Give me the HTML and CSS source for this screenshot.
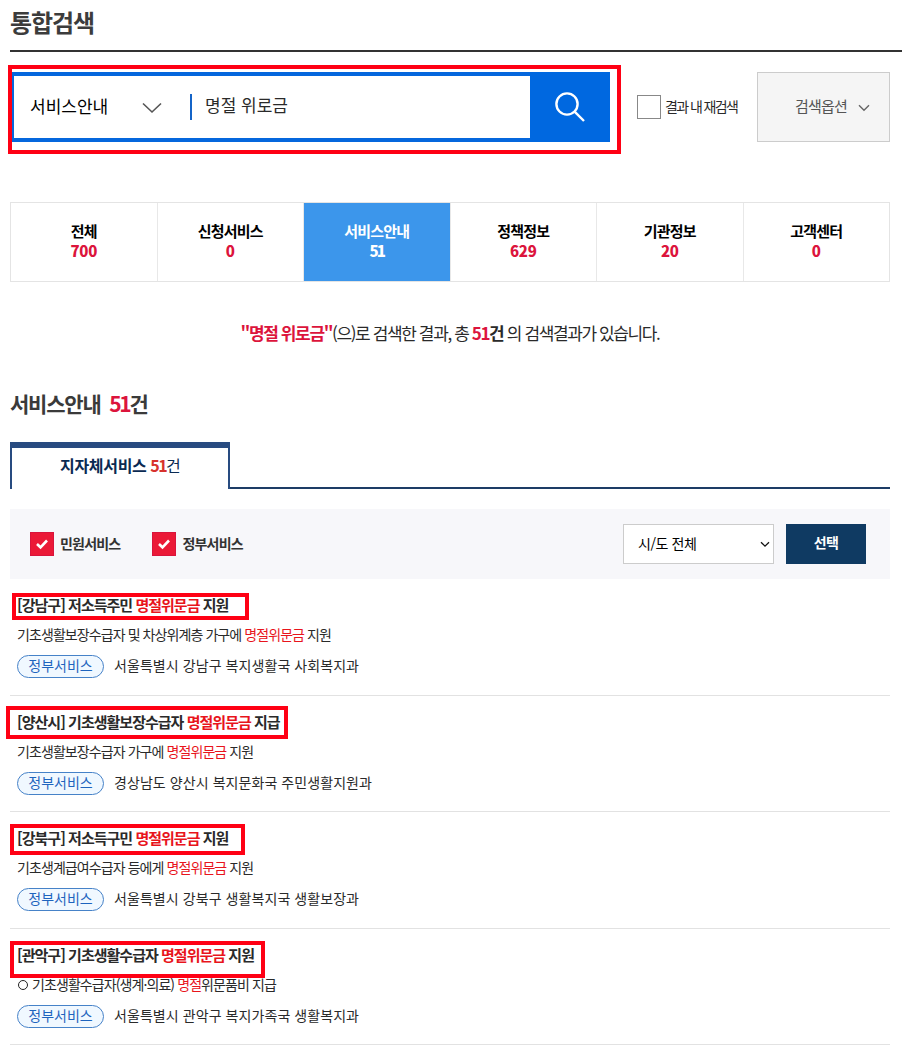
FILE: index.html
```
<!DOCTYPE html>
<html lang="ko">
<head>
<meta charset="utf-8">
<title>통합검색</title>
<link rel="stylesheet" href="styles.css">
</head>
<body>

<h1 class="page-title">통합검색</h1>

<!-- search bar -->
<div class="search">
  <div class="search-box">
    <div class="search-type">서비스안내
      <svg width="20" height="12" viewBox="0 0 20 12"><path d="M1 1.5L10 10L19 1.5" fill="none" stroke="#555" stroke-width="1.6"/></svg>
    </div>
    <div class="search-word">명절 위로금</div>
    <div class="search-btn">
      <svg width="32" height="32" viewBox="0 0 32 32" fill="none" stroke="#fff" stroke-width="2.4"><circle cx="13" cy="13" r="10.6"/><path d="M20.6 20.6L30 30"/></svg>
    </div>
    <span class="mark mark-search"></span>
  </div>
  <label class="again"><span class="again-box"></span><span class="again-text">결과 내 재검색</span></label>
  <div class="option">검색옵션
    <svg width="12" height="8" viewBox="0 0 12 8"><path d="M1 1.2L6 6.2L11 1.2" fill="none" stroke="#666" stroke-width="1.4"/></svg>
  </div>
</div>

<!-- category tabs -->
<ul class="tabs">
  <li>전체<b>700</b></li>
  <li>신청서비스<b>0</b></li>
  <li class="on">서비스안내<b class="n51">51</b></li>
  <li>정책정보<b>629</b></li>
  <li>기관정보<b>20</b></li>
  <li>고객센터<b>0</b></li>
</ul>

<p class="summary"><b class="point">"명절 위로금"</b>(으)로 검색한 결과, 총 <b><span class="point">51</span>건</b> 의 검색결과가 있습니다.</p>

<h2 class="section-title">서비스안내 <span class="count"><span class="point">51</span>건</span></h2>

<div class="sub-tabs">
  <div class="sub-tab"><b>지자체서비스</b> <em>51</em>건</div>
</div>

<!-- filter -->
<div class="filter">
  <label class="check"><span class="check-box"><svg width="14" height="12" viewBox="0 0 14 12"><path d="M2 6L5.5 9.3L12 2.5" fill="none" stroke="#fff" stroke-width="2.6"/></svg></span><span class="check-text">민원서비스</span></label>
  <label class="check"><span class="check-box"><svg width="14" height="12" viewBox="0 0 14 12"><path d="M2 6L5.5 9.3L12 2.5" fill="none" stroke="#fff" stroke-width="2.6"/></svg></span><span class="check-text">정부서비스</span></label>
  <div class="select">시/도 전체
    <svg width="10" height="7" viewBox="0 0 10 7"><path d="M1 1.2L5 5.2L9 1.2" fill="none" stroke="#111" stroke-width="1.3"/></svg>
  </div>
  <div class="submit">선택</div>
</div>

<!-- results -->
<ul class="list">
  <li>
    <span class="mark mark-1"></span>
    <h3>[강남구] 저소득주민 <em>명절위문금</em> 지원</h3>
    <p class="desc">기초생활보장수급자 및 차상위계층 가구에 <em>명절위문금</em> 지원</p>
    <p class="dept"><span class="pill">정부서비스</span><span class="dept-name">서울특별시 강남구 복지생활국 사회복지과</span></p>
  </li>
  <li>
    <span class="mark mark-2"></span>
    <h3>[양산시] 기초생활보장수급자 <em>명절위문금</em> 지급</h3>
    <p class="desc">기초생활보장수급자 가구에 <em>명절위문금</em> 지원</p>
    <p class="dept"><span class="pill">정부서비스</span><span class="dept-name">경상남도 양산시 복지문화국 주민생활지원과</span></p>
  </li>
  <li>
    <span class="mark mark-3"></span>
    <h3>[강북구] 저소득구민 <em>명절위문금</em> 지원</h3>
    <p class="desc">기초생계급여수급자 등에게 <em>명절위문금</em> 지원</p>
    <p class="dept"><span class="pill">정부서비스</span><span class="dept-name">서울특별시 강북구 생활복지국 생활보장과</span></p>
  </li>
  <li>
    <span class="mark mark-4"></span>
    <h3>[관악구] 기초생활수급자 <em>명절위문금</em> 지원</h3>
    <p class="desc"><span class="circle"></span>기초생활수급자(생계·의료) <em>명절</em>위문품비 지급</p>
    <p class="dept"><span class="pill">정부서비스</span><span class="dept-name">서울특별시 관악구 복지가족국 생활복지과</span></p>
  </li>
</ul>

</body>
</html>
```
FILE: styles.css
```
* {
  box-sizing: border-box;
}

body {
  margin: 0;
  padding-left: 10px;
  height: 1050px;
  overflow: hidden;
  background: #fff;
  color: #2a2a2a;
  font-family: "Noto Sans CJK KR", "Noto Sans", sans-serif;
  font-size: 14px;
}

h1, h2, h3, p, ul {
  margin: 0;
  padding: 0;
}

ul {
  list-style: none;
}

em {
  font-style: normal;
  color: #e8141c;
}

svg {
  display: block;
}

.point {
  color: #dc143c;
}

.page-title {
  height: 52px;
  border-bottom: 2px solid #333;
  font-size: 24px;
  font-weight: bold;
  line-height: 43px;
  letter-spacing: -1.1px;
  color: #3c3c3c;
}

/* search bar */
.search {
  display: flex;
  align-items: center;
  width: 880px;
  height: 70px;
  margin-top: 20px;
}

.search-box {
  position: relative;
  display: flex;
  align-items: center;
  width: 600px;
  height: 70px;
  border: 4px solid #0567dd;
  border-right: 0;
  font-size: 17px;
}

.search-type {
  display: flex;
  align-items: center;
  justify-content: space-between;
  width: 148px;
  padding-left: 16px;
  padding-bottom: 4px;
  color: #000;
}

.search-type svg {
  margin-top: 5px;
}

.search-word {
  flex: 1;
  height: 26px;
  margin-left: 28px;
  padding-left: 13px;
  border-left: 2px solid #1464c8;
  line-height: 22px;
}

.search-btn {
  display: flex;
  align-items: center;
  justify-content: center;
  width: 80px;
  height: 70px;
  background: #0068e0;
}

.again {
  display: flex;
  align-items: center;
  gap: 4px;
  width: 120px;
  margin-left: 27px;
  letter-spacing: -1.6px;
}

.again-text {
  padding-bottom: 3px;
}

.again-box {
  width: 24px;
  height: 24px;
  border: 1px solid #888;
}

.option {
  display: flex;
  align-items: center;
  justify-content: space-between;
  width: 133px;
  height: 70px;
  padding: 0 19px 3px 37px;
  border: 1px solid #ccc;
  background: #f5f5f5;
  color: #555;
  font-size: 15px;
  letter-spacing: -0.8px;
}

.option svg {
  margin-top: 4px;
}

/* category tabs */
.tabs {
  display: flex;
  width: 880px;
  height: 80px;
  margin-top: 60px;
  border: 1px solid #e4e4e4;
}

.tabs li {
  flex: 1;
  padding-top: 18px;
  border-left: 1px solid #e8e8e8;
  color: #000;
  font-size: 15px;
  font-weight: bold;
  line-height: 20px;
  letter-spacing: -0.8px;
  text-align: center;
}

.tabs li:first-child {
  border-left: 0;
}

.tabs b {
  display: block;
  color: #dc143c;
  letter-spacing: -0.3px;
}

.tabs .on {
  background: #3c96eb;
  background-clip: padding-box;
  color: #fff;
}

.tabs .on b {
  color: #fff;
}

.tabs .n51 {
  letter-spacing: -1.8px;
}

.summary {
  width: 880px;
  margin-top: 37px;
  font-size: 17px;
  line-height: 28px;
  letter-spacing: -1.38px;
  text-align: center;
}

.section-title {
  margin-top: 40px;
  color: #3a3a3a;
  font-size: 21px;
  font-weight: bold;
  line-height: 32px;
  letter-spacing: -1.2px;
}

.count {
  margin-left: 4px;
  letter-spacing: -2.3px;
}

.sub-tabs {
  width: 880px;
  height: 47px;
  margin-top: 23px;
  display: flex;
}

.sub-tabs::after {
  content: "";
  flex: 1;
  border-bottom: 2px solid #1d3c66;
}

.sub-tab {
  width: 220px;
  border: 2px solid #284b80;
  border-top-width: 6px;
  border-bottom: 0;
  color: #0a2a52;
  font-size: 16px;
  line-height: 35px;
  letter-spacing: -0.8px;
  text-align: center;
}

.sub-tab b {
  letter-spacing: -0.3px;
}

.sub-tab em {
  color: #d7322d;
  font-weight: bold;
  letter-spacing: -1.5px;
}

/* filter */
.filter {
  display: flex;
  align-items: center;
  width: 880px;
  height: 70px;
  margin-top: 20px;
  padding: 0 24px 0 20px;
  background: #f7f7fa;
}

.check {
  display: flex;
  align-items: center;
  gap: 6px;
  margin-right: 32px;
  color: #333;
  font-weight: bold;
  letter-spacing: -0.8px;
}

.check-text {
  padding-bottom: 3px;
}

.check-box {
  display: flex;
  align-items: center;
  justify-content: center;
  width: 24px;
  height: 24px;
  border: 1px solid #d8143c;
  background: #eb1937;
}

.select {
  display: flex;
  align-items: center;
  justify-content: space-between;
  width: 151px;
  height: 40px;
  margin-left: auto;
  padding: 0 3px 3px 14px;
  border: 1px solid #ccc;
  background: #fff;
  color: #000;
  letter-spacing: -0.4px;
}

.select svg {
  margin-top: 4px;
}

.submit {
  width: 80px;
  height: 40px;
  margin-left: 12px;
  background: #0f3a62;
  color: #fff;
  font-weight: bold;
  line-height: 37px;
  letter-spacing: -0.6px;
  text-align: center;
}

/* results */
.list {
  width: 880px;
}

.list li {
  position: relative;
  height: 116.6px;
  padding: 15px 0 0 7px;
  border-bottom: 1px solid #e2e2e2;
}

.list h3 {
  font-size: 15px;
  font-weight: bold;
  line-height: 22px;
  letter-spacing: -0.98px;
}

.desc {
  margin-top: 7px;
  line-height: 22px;
  letter-spacing: -0.92px;
}

.circle {
  display: inline-block;
  width: 10px;
  height: 10px;
  margin: 0 4px 0 1px;
  border: 1px solid #222;
  border-radius: 50%;
}

.dept {
  display: flex;
  align-items: center;
  margin-top: 10px;
}

.dept-name {
  padding-bottom: 3px;
  letter-spacing: 0.07px;
}

.pill {
  width: 87px;
  height: 23px;
  margin-right: 10px;
  border: 1px solid #4682c8;
  border-radius: 12px;
  background: #f0f8ff;
  color: #1e64be;
  line-height: 19px;
  text-align: center;
}

/* red frames drawn over the page */
.mark {
  position: absolute;
  border: 4px solid #ff0014;
}

.mark-search {
  left: -6px;
  top: -11px;
  width: 613px;
  height: 89px;
}

.mark-1 {
  left: 2px;
  top: 14px;
  width: 237px;
  height: 27px;
}

.mark-2 {
  left: -4px;
  top: 10px;
  width: 282px;
  height: 33px;
}

.mark-3 {
  left: 0;
  top: 12px;
  width: 235px;
  height: 31px;
}

.mark-4 {
  left: 0;
  top: 12px;
  width: 255px;
  height: 37px;
}
```
